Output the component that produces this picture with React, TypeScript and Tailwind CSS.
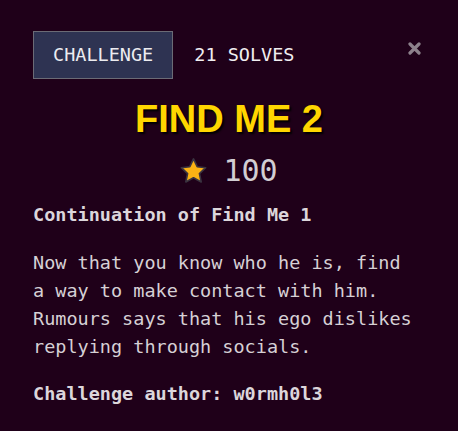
const mono = { fontFamily: '"DejaVu Sans Mono", "Liberation Mono", monospace' };

function Star() {
  return (
    <svg width="27" height="26" viewBox="0 0 24 23" className="shrink-0">
      <path
        d="M12 0.8l3.3 6.9 7.5.9-5.5 5.2 1.5 7.4L12 17.6 5.2 21.2l1.5-7.4L1.2 8.6l7.5-.9z"
        fill="#fbb214"
        stroke="#3a3340"
        strokeWidth="1.5"
        strokeLinejoin="round"
      />
    </svg>
  );
}

function CloseIcon() {
  return (
    <svg width="13" height="13" viewBox="0 0 13 13">
      <path d="M2 2l9 9M11 2l-9 9" stroke="#8d818c" strokeWidth="3.2" strokeLinecap="round" />
    </svg>
  );
}

export default function App() {
  return (
    <div className="h-[431px] w-[458px] overflow-hidden bg-[#1f0019] px-[33px] pt-[31px]" style={mono}>
      <div className="flex items-center justify-between">
        <div className="flex items-center gap-[21px]">
          <div className="flex h-[48px] items-center border border-[#6b6b75] bg-[#2e3352] px-[19px] text-[18.5px] text-[#ececf0]">
            CHALLENGE
          </div>
          <span className="text-[18.5px] text-[#f0eef0]">21 SOLVES</span>
        </div>
        <button className="-mt-[14px] mr-[4px]">
          <CloseIcon />
        </button>
      </div>

      <h1
        className="mt-[18px] text-center text-[38px] font-bold leading-[44px] text-[#ffd600] [text-shadow:2px_2px_2px_#000]"
        style={{ fontFamily: '"Liberation Sans", Arial, sans-serif' }}
      >
        FIND ME 2
      </h1>

      <div className="mt-[12px] flex items-center justify-center gap-[16px]">
        <Star />
        <span className="text-[30px] leading-[36px] text-[#d2ced3]">100</span>
      </div>

      <div className="mt-[12px] text-[18.5px] font-bold leading-[28px] text-[#dcd6db]">
        Continuation of Find Me 1
      </div>

      <p className="mt-[20px] w-[385px] text-[18.5px] leading-[28px] text-[#d6d0d5]">
        Now that you know who he is, find a way to make contact with him. Rumours says that his ego dislikes
        replying through socials.
      </p>

      <div className="mt-[19px] text-[18.5px] font-bold leading-[28px] text-[#dcd6db]">
        Challenge author: w0rmh0l3
      </div>
    </div>
  );
}
